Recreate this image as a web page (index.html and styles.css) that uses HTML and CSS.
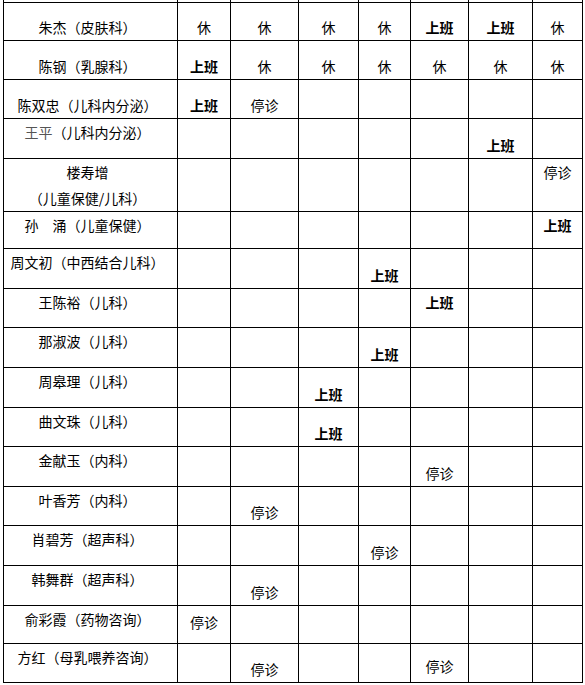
FILE: index.html
```html
<!DOCTYPE html>
<html lang="zh-CN">
<head>
<meta charset="utf-8">
<title>排班表</title>
<link rel="stylesheet" href="styles.css">
</head>
<body>
<table class="sched">
  <colgroup>
    <col class="c1"><col class="c2"><col class="c3"><col class="c4"><col class="c5"><col class="c6"><col class="c7"><col class="c8">
  </colgroup>
  <tbody>
    <tr class="cut"><td></td><td></td><td></td><td></td><td></td><td></td><td></td><td></td></tr>
    <tr class="h38">
      <td class="name">朱杰（皮肤科）</td><td>休</td><td>休</td><td>休</td><td>休</td><td class="on">上班</td><td class="on">上班</td><td>休</td>
    </tr>
    <tr class="h39">
      <td class="name">陈钢（乳腺科）</td><td class="on">上班</td><td>休</td><td>休</td><td>休</td><td>休</td><td>休</td><td>休</td>
    </tr>
    <tr class="h39">
      <td class="name">陈双忠（儿科内分泌）</td><td class="on">上班</td><td>停诊</td><td></td><td></td><td></td><td></td><td></td>
    </tr>
    <tr class="h40">
      <td class="name t"><span class="grey">王平</span>（儿科内分泌）</td><td></td><td></td><td></td><td></td><td></td><td class="on">上班</td><td></td>
    </tr>
    <tr class="h52">
      <td class="name t">楼寿增<br>（儿童保健/儿科）</td><td></td><td></td><td></td><td></td><td></td><td></td><td class="t">停诊</td>
    </tr>
    <tr class="h37">
      <td class="name t">孙　涌（儿童保健）</td><td></td><td></td><td></td><td></td><td></td><td></td><td class="on t">上班</td>
    </tr>
    <tr class="h40">
      <td class="name t">周文初（中西结合儿科）</td><td></td><td></td><td></td><td class="on">上班</td><td></td><td></td><td></td>
    </tr>
    <tr class="h39">
      <td class="name t">王陈裕（儿科）</td><td></td><td></td><td></td><td></td><td class="on t">上班</td><td></td><td></td>
    </tr>
    <tr class="h40">
      <td class="name t">那淑波（儿科）</td><td></td><td></td><td></td><td class="on">上班</td><td></td><td></td><td></td>
    </tr>
    <tr class="h40">
      <td class="name t">周皋理（儿科）</td><td></td><td></td><td class="on">上班</td><td></td><td></td><td></td><td></td>
    </tr>
    <tr class="h39">
      <td class="name t">曲文珠（儿科）</td><td></td><td></td><td class="on">上班</td><td></td><td></td><td></td><td></td>
    </tr>
    <tr class="h40">
      <td class="name t">金献玉（内科）</td><td></td><td></td><td></td><td></td><td>停诊</td><td></td><td></td>
    </tr>
    <tr class="h39">
      <td class="name t">叶香芳（内科）</td><td></td><td>停诊</td><td></td><td></td><td></td><td></td><td></td>
    </tr>
    <tr class="h40">
      <td class="name t">肖碧芳（超声科）</td><td></td><td></td><td></td><td>停诊</td><td></td><td></td><td></td>
    </tr>
    <tr class="h40">
      <td class="name t">韩舞群（超声科）</td><td></td><td>停诊</td><td></td><td></td><td></td><td></td><td></td>
    </tr>
    <tr class="h38">
      <td class="name t">俞彩霞（药物咨询）</td><td class="m">停诊</td><td></td><td></td><td></td><td></td><td></td><td></td>
    </tr>
    <tr class="h39">
      <td class="name t">方红（母乳喂养咨询）</td><td></td><td>停诊</td><td></td><td></td><td class="up">停诊</td><td></td><td></td>
    </tr>
  </tbody>
</table>
</body>
</html>
```
FILE: styles.css
```css
html, body {
  margin: 0;
  padding: 0;
  background: #fff;
}

body {
  font-family: "Noto Sans CJK SC", "Noto Sans", sans-serif;
  font-size: 14px;
  color: #000;
}

.sched {
  border-collapse: collapse;
  table-layout: fixed;
  width: 579px;
  margin: -10px 0 0 3px;
}

.c1 { width: 174px; }
.c2 { width: 53px; }
.c3 { width: 68px; }
.c4 { width: 60px; }
.c5 { width: 52px; }
.c6 { width: 58px; }
.c7 { width: 64px; }
.c8 { width: 50px; }

.sched td {
  border: 1px solid #000;
  padding: 0;
  line-height: 26px;
  text-align: center;
  vertical-align: bottom;
  white-space: nowrap;
}

.cut td { height: 12px; border-top: none; }

.h37 { height: 37px; }
.h38 { height: 38px; }
.h39 { height: 39px; }
.h40 { height: 40px; }
.h52 { height: 52px; }

.sched td.name { padding-right: 6px; }
.sched td.t { vertical-align: top; }
.sched td.m { vertical-align: top; padding-top: 3px; }
.sched td.up { padding-bottom: 3px; }
.sched td.on { font-weight: 700; }

.grey { color: #555; }
```
